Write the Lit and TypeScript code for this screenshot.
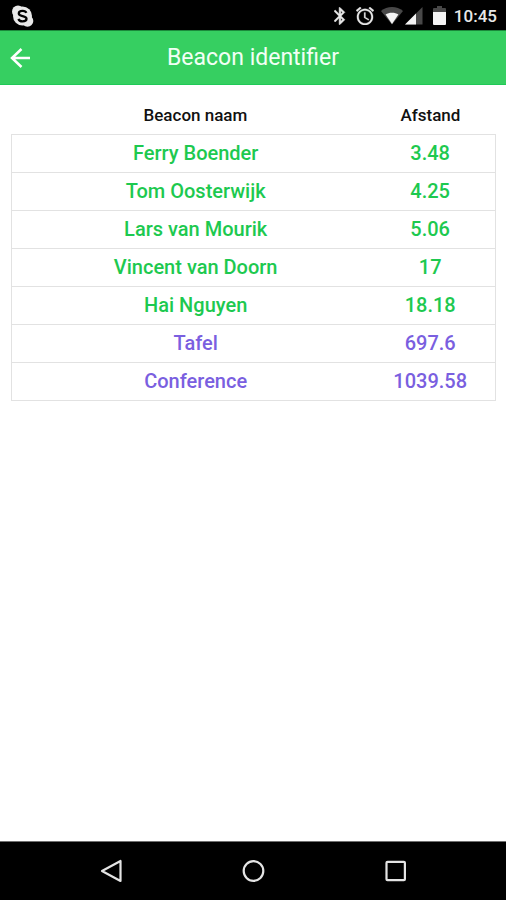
import { LitElement, html, css } from "lit";
import { customElement, state } from "lit/decorators.js";
import { classMap } from "lit/directives/class-map.js";

interface Beacon {
  name: string;
  distance: string;
  near: boolean;
}

@customElement("status-bar")
class StatusBar extends LitElement {
  static styles = css`
    :host {
      display: flex;
      align-items: center;
      justify-content: space-between;
      height: 30px;
      padding: 2px 9px 0 11px;
      box-sizing: border-box;
      background: #000;
      color: #e8e8e8;
    }
    svg {
      display: block;
    }
    .right {
      display: flex;
      align-items: center;
    }
    .bluetooth {
      margin-right: 10px;
    }
    .alarm {
      margin-right: 7px;
    }
    .wifi {
      margin-right: 2px;
    }
    .signal {
      margin-right: 10px;
    }
    .battery {
      margin-right: 8px;
    }
    .time {
      font-size: 17px;
      line-height: 24px;
      font-weight: 500;
    }
  `;

  render() {
    return html`
      <svg width="23" height="24" viewBox="0 0 23 24" role="img" aria-label="Skype">
        <circle cx="11.500" cy="12" r="9.500" fill="#e8e8e8" />
        <circle cx="7" cy="7.500" r="6" fill="#e8e8e8" />
        <circle cx="16.500" cy="17" r="5.800" fill="#e8e8e8" />
        <path
          d="M15.300 8.800C14.800 7.400 13.400 6.800 11.600 6.800C9.300 6.800 7.800 7.800 7.800 9.400C7.800 11.200 9.700 11.600 11.700 12.100C13.900 12.600 15.500 13.100 15.500 14.800C15.500 16.500 13.800 17.400 11.600 17.400C9.500 17.400 7.900 16.500 7.500 14.900"
          fill="none"
          stroke="#000"
          stroke-width="2.300"
        />
      </svg>
      <div class="right">
        <svg class="bluetooth" width="12" height="18" viewBox="5 2 14 20" role="img" aria-label="Bluetooth">
          <path
            fill="#e8e8e8"
            stroke="#e8e8e8"
            stroke-width=".6"
            d="M17.710 7.710 12 2h-1v7.590L6.410 5 5 6.410 10.590 12 5 17.590 6.410 19 11 14.410V22h1l5.710-5.710-4.300-4.290 4.300-4.290zM13 5.830l1.880 1.880L13 9.590V5.830zm1.880 10.460L13 18.170v-3.760l1.880 1.880z"
          />
        </svg>
        <svg class="alarm" width="18" height="18" viewBox="2 2 20 20" role="img" aria-label="Alarm">
          <path
            fill="#e8e8e8"
            stroke="#e8e8e8"
            stroke-width=".3"
            d="M22 5.720l-4.600-3.860-1.290 1.530 4.600 3.860L22 5.720zM7.880 3.390L6.600 1.860 2 5.710l1.290 1.530 4.590-3.850zM12.500 8H11v6l4.750 2.850.75-1.230-4-2.370V8zM12 4c-4.970 0-9 4.030-9 9s4.020 9 9 9c4.970 0 9-4.030 9-9s-4.030-9-9-9zm0 16c-3.870 0-7-3.130-7-7s3.130-7 7-7 7 3.130 7 7-3.130 7-7 7z"
          />
        </svg>
        <svg class="wifi" width="22" height="18" viewBox="0 0 22 18" role="img" aria-label="Wi-Fi">
          <path fill="#484848" d="M0 4C3 1.500 7 0 11 0S19 1.500 22 4L11 17.500Z" />
          <path fill="#f4f4f4" d="M4.600 7.500C8 5 14 5 17.400 7.500L11 17Z" />
        </svg>
        <svg class="signal" width="18" height="18" viewBox="0 0 18 18" role="img" aria-label="Signal">
          <path fill="#484848" d="M17.500 0V17.500H0Z" />
          <path fill="#f4f4f4" d="M11 6.500V17.500H0Z" />
        </svg>
        <svg class="battery" width="13" height="20" viewBox="0 0 13 20" role="img" aria-label="Battery">
          <path fill="#484848" d="M4 0H9V2H12Q13 2 13 3V8H0V3Q0 2 1 2H4Z" />
          <path fill="#f4f4f4" d="M0 6H13V18Q13 19 12 19H1Q0 19 0 18Z" />
        </svg>
        <span class="time">10:45</span>
      </div>
    `;
  }
}

@customElement("nav-bar")
class NavBar extends LitElement {
  static styles = css`
    :host {
      display: flex;
      justify-content: center;
      height: 59px;
      box-sizing: border-box;
      border-top: 1px solid #707070;
      background: #000;
    }
    button {
      display: flex;
      align-items: center;
      justify-content: center;
      flex: 0 0 28%;
      padding: 0;
      border: 0;
      background: none;
      cursor: pointer;
    }
    svg {
      fill: none;
      stroke: #e4e4e4;
      stroke-width: 2.200;
      stroke-linejoin: round;
    }
  `;

  render() {
    return html`
      <button type="button" aria-label="Back">
        <svg width="24" height="24" viewBox="0 0 24 24"><path d="M21.500 2V22L3 12Z" /></svg>
      </button>
      <button type="button" aria-label="Home">
        <svg width="24" height="24" viewBox="0 0 24 24"><circle cx="12.500" cy="12" r="9.800" /></svg>
      </button>
      <button type="button" aria-label="Overview">
        <svg width="24" height="24" viewBox="0 0 24 24">
          <rect x="3.500" y="2.800" width="18.400" height="18.400" rx="1" />
        </svg>
      </button>
    `;
  }
}

@customElement("app-root")
class AppRoot extends LitElement {
  static styles = css`
    :host {
      display: flex;
      flex-direction: column;
      min-height: 100vh;
      background: #fff;
      font-family: Roboto, "Liberation Sans", sans-serif;
    }
    header {
      display: grid;
      grid-template-columns: 40px 1fr 40px;
      align-items: center;
      height: 55px;
      box-sizing: border-box;
      border-top: 1px solid #1b8a3b;
      border-bottom: 1px solid #1fc957;
      background: #36cf61;
      color: #fff;
    }
    .back {
      display: flex;
      align-items: center;
      justify-content: center;
      height: 40px;
      padding: 0;
      border: 0;
      background: none;
      cursor: pointer;
    }
    h1 {
      margin: 0;
      font-size: 23px;
      line-height: 32px;
      font-weight: 400;
      text-align: center;
      color: #f2fff5;
    }
    main {
      flex: 1;
      padding: 14px 10px 24px 11px;
    }
    table {
      width: 100%;
      table-layout: fixed;
      border-collapse: collapse;
      text-align: center;
    }
    .name {
      width: 76%;
    }
    th {
      height: 35px;
      padding: 0 0 3px;
      box-sizing: border-box;
      font-size: 17px;
      line-height: 24px;
      font-weight: 500;
      color: #111;
    }
    tbody {
      border: 1px solid #e2e2e2;
    }
    td {
      height: 38px;
      padding: 0;
      box-sizing: border-box;
      border-top: 1px solid #e2e2e2;
      font-size: 20px;
      line-height: 24px;
      font-weight: 500;
      color: #7a5fe0;
    }
    th:last-child,
    td:last-child {
      padding-right: 14px;
    }
    .near td {
      color: #1dc94f;
    }
  `;

  @state() private beacons: Beacon[] = [
    { name: "Ferry Boender", distance: "3.48", near: true },
    { name: "Tom Oosterwijk", distance: "4.25", near: true },
    { name: "Lars van Mourik", distance: "5.06", near: true },
    { name: "Vincent van Doorn", distance: "17", near: true },
    { name: "Hai Nguyen", distance: "18.18", near: true },
    { name: "Tafel", distance: "697.6", near: false },
    { name: "Conference", distance: "1039.58", near: false },
  ];

  render() {
    return html`
      <status-bar></status-bar>
      <header>
        <button class="back" type="button" aria-label="Back">
          <svg width="20" height="20" viewBox="0 0 20 20" fill="none" stroke="#fff" stroke-width="2.500">
            <path d="M20 10H2M11.500 1L2 10L11.500 19" />
          </svg>
        </button>
        <h1>Beacon identifier</h1>
      </header>
      <main>
        <table>
          <thead>
            <tr>
              <th class="name" scope="col">Beacon naam</th>
              <th scope="col">Afstand</th>
            </tr>
          </thead>
          <tbody>
            ${this.beacons.map(
              (b) => html`
                <tr class=${classMap({ near: b.near })}>
                  <td>${b.name}</td>
                  <td>${b.distance}</td>
                </tr>
              `
            )}
          </tbody>
        </table>
      </main>
      <nav-bar></nav-bar>
    `;
  }
}
